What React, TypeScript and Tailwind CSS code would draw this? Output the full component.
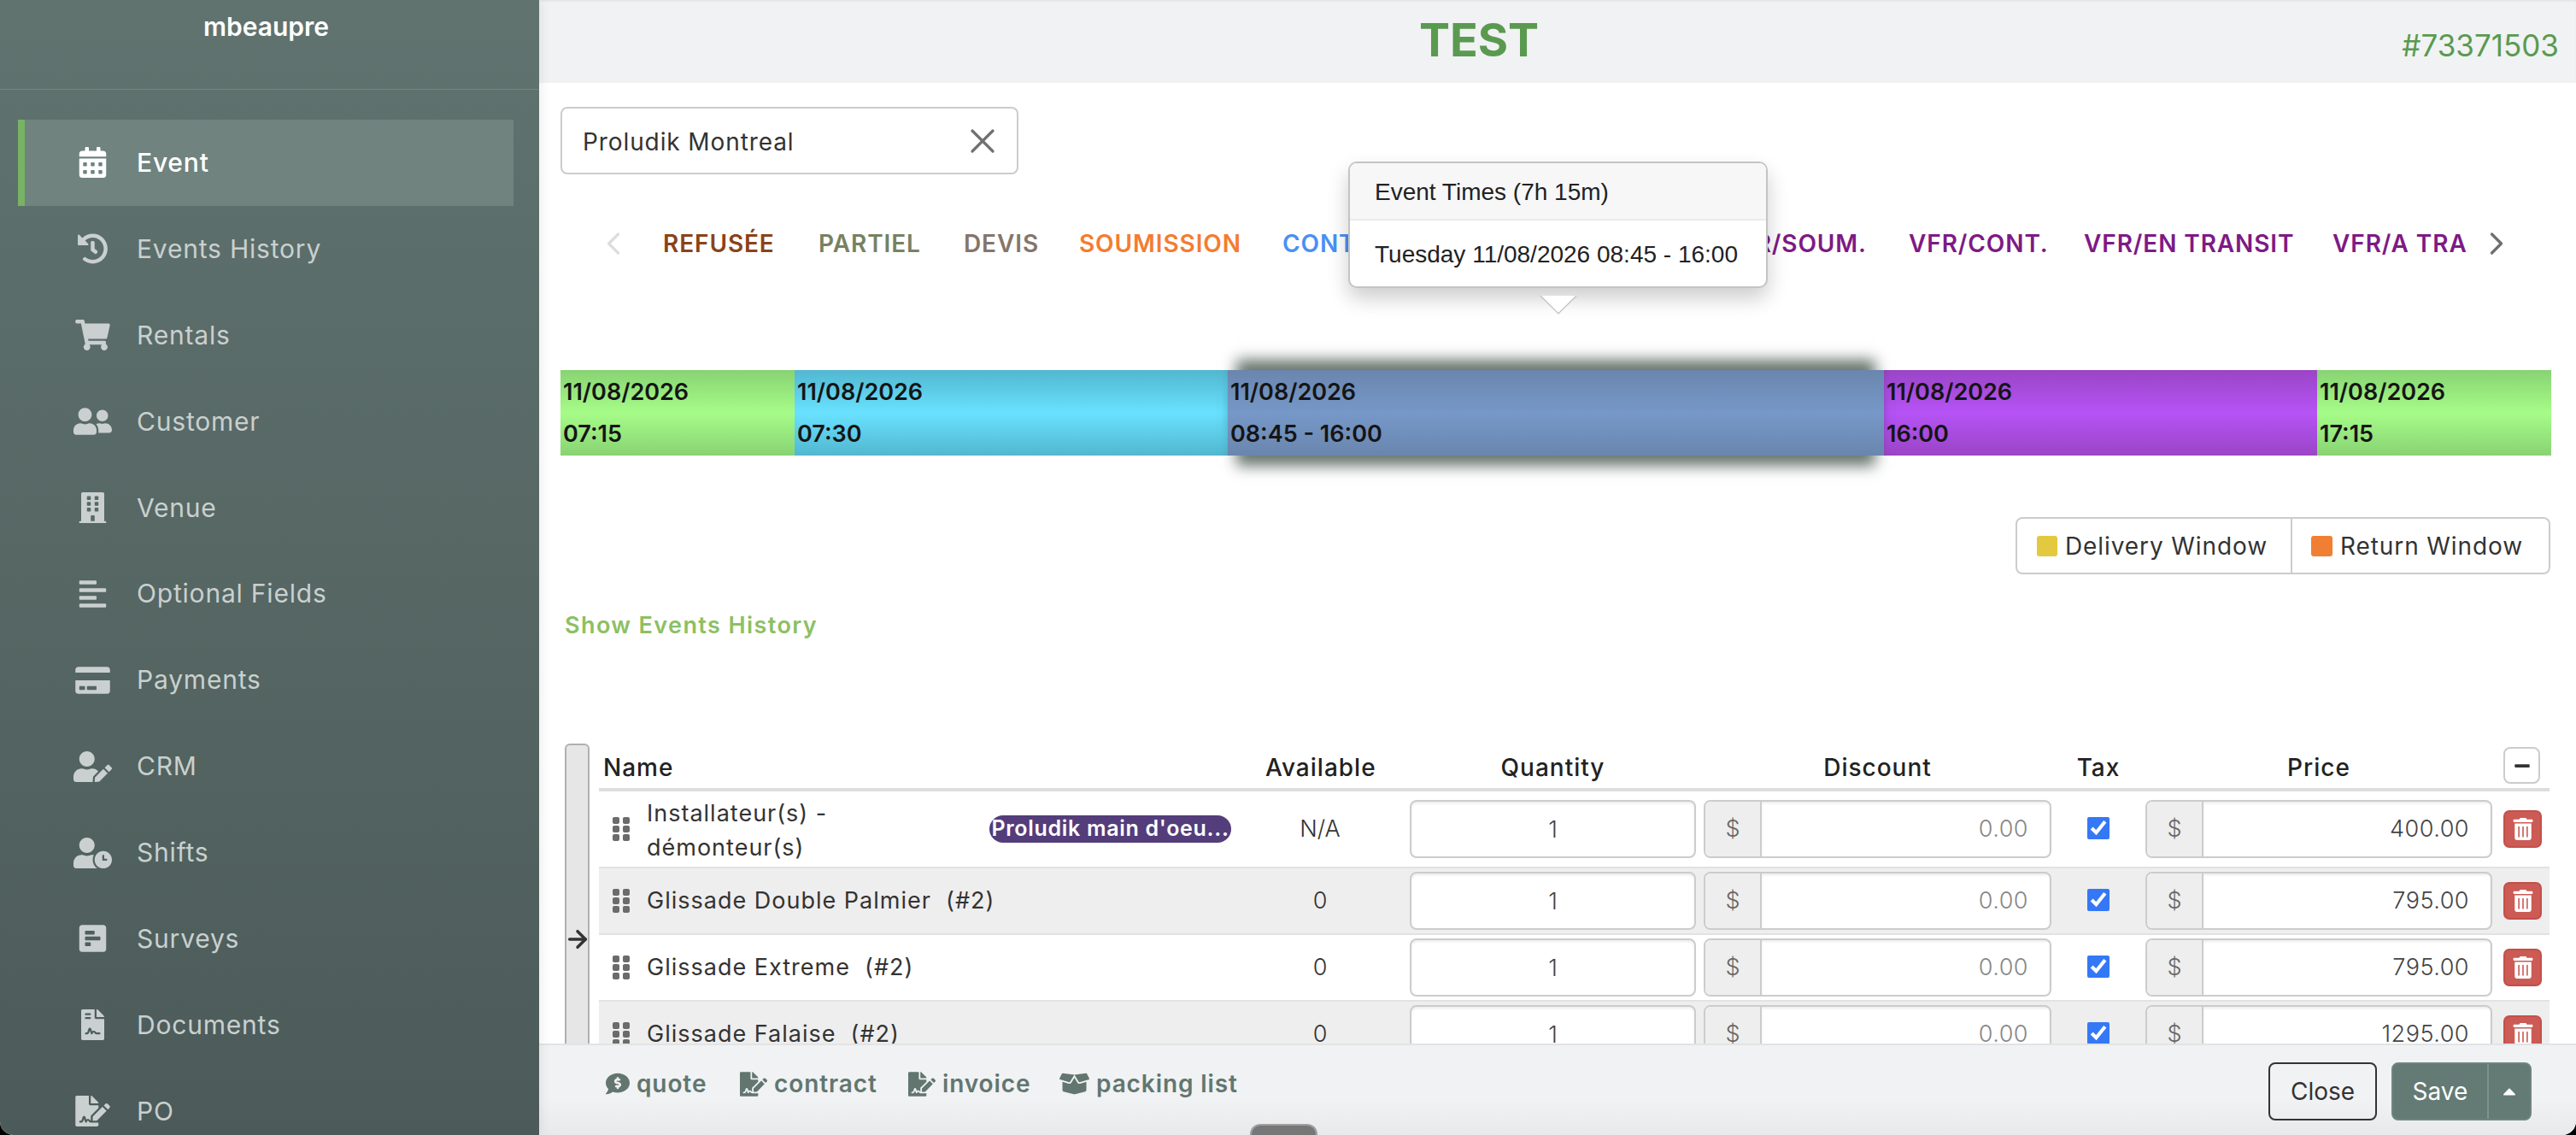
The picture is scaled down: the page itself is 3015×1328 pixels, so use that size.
import { ArrowRight, ChevronLeft, ChevronRight, X } from "lucide-react";
import type { IconType } from "react-icons";
import {
  FaAlignLeft,
  FaBoxOpen,
  FaBuilding,
  FaCalendarAlt,
  FaCaretUp,
  FaCommentDollar,
  FaCreditCard,
  FaFileContract,
  FaFileSignature,
  FaGripVertical,
  FaHistory,
  FaMinus,
  FaPollH,
  FaShoppingCart,
  FaTrashAlt,
  FaUserClock,
  FaUserEdit,
  FaUserFriends,
} from "react-icons/fa";

const navItems: { label: string; icon: IconType; active?: boolean }[] = [
  { label: "Event", icon: FaCalendarAlt, active: true },
  { label: "Events History", icon: FaHistory },
  { label: "Rentals", icon: FaShoppingCart },
  { label: "Customer", icon: FaUserFriends },
  { label: "Venue", icon: FaBuilding },
  { label: "Optional Fields", icon: FaAlignLeft },
  { label: "Payments", icon: FaCreditCard },
  { label: "CRM", icon: FaUserEdit },
  { label: "Shifts", icon: FaUserClock },
  { label: "Surveys", icon: FaPollH },
  { label: "Documents", icon: FaFileContract },
  { label: "PO", icon: FaFileSignature },
];

const tabs = [
  { label: "REFUSÉE", className: "w-[182px] text-[#8a4317]" },
  { label: "PARTIEL", className: "w-[170px] text-[#77815f]" },
  { label: "DEVIS", className: "w-[135px] text-[#85756a]" },
  { label: "SOUMISSION", className: "w-[238px] text-[#f47c30]" },
  { label: "CONTRAT", className: "w-[515px] text-[#4a90f5]" },
  { label: "VFR/SOUM.", className: "w-[218px] text-[#7d1a85]" },
  { label: "VFR/CONT.", className: "w-[205px] text-[#7d1a85]" },
  { label: "VFR/EN TRANSIT", className: "w-[291px] text-[#7d1a85]" },
  { label: "VFR/A TRANSIT", className: "w-[300px] text-[#7d1a85]" },
];

const segments = [
  { lines: ["11/08/2026", "07:15"], className: "w-[274px] from-[#88d373] via-[#a6fc88] to-[#88d373]" },
  { lines: ["11/08/2026", "07:30"], className: "w-[507px] from-[#52b7d0] via-[#69e2ff] to-[#52b7d0]" },
  {
    lines: ["11/08/2026", "08:45 - 16:00"],
    className:
      "w-[768px] relative z-10 from-[#6a86ae] via-[#7698c8] to-[#6a86ae] shadow-[0_-22px_16px_-10px_rgba(10,30,20,0.62),0_22px_16px_-10px_rgba(10,30,20,0.62)]",
  },
  { lines: ["11/08/2026", "16:00"], className: "w-[507px] from-[#9a45c6] via-[#b653f6] to-[#9a45c6]" },
  { lines: ["11/08/2026", "17:15"], className: "w-[274px] from-[#88d373] via-[#a6fc88] to-[#88d373]" },
];

const rows = [
  { name: "Installateur(s) - démonteur(s)", available: "N/A", price: "400.00", badge: "Proludik main d'oeu..." },
  { name: "Glissade Double Palmier\u00a0 (#2)", available: "0", price: "795.00" },
  { name: "Glissade Extreme\u00a0 (#2)", available: "0", price: "795.00" },
  { name: "Glissade Falaise\u00a0 (#2)", available: "0", price: "1295.00" },
];

const docLinks: { label: string; icon: IconType; className: string; iconClass: string }[] = [
  { label: "quote", icon: FaCommentDollar, className: "w-[157px]", iconClass: "h-[28px] w-[28px]" },
  { label: "contract", icon: FaFileSignature, className: "w-[197px]", iconClass: "h-[29px] w-[32px]" },
  { label: "invoice", icon: FaFileSignature, className: "w-[177px]", iconClass: "h-[29px] w-[32px]" },
  { label: "packing list", icon: FaBoxOpen, className: "w-[220px]", iconClass: "h-[28px] w-[35px]" },
];

const gridCols = "grid grid-cols-[789px_110px_385px_416px_110px_406px_67px] items-center";

function MoneyInput({ value, muted }: { value: string; muted?: boolean }) {
  return (
    <div className="flex h-[68px] overflow-hidden rounded-[8px] border-2 border-[#cccccc] bg-white">
      <span className="flex w-[66px] flex-none items-center justify-center border-r-2 border-[#cccccc] bg-[#eeeeee] text-[27px] font-light text-[#666666]">
        $
      </span>
      <input
        readOnly
        value={value}
        className={`min-w-0 flex-1 pr-[25px] text-right text-[27px] font-light tracking-[0.5px] shadow-[inset_0_2px_3px_rgba(0,0,0,0.08)] outline-none ${
          muted ? "text-[#888888]" : "text-[#444444]"
        }`}
      />
    </div>
  );
}

function ItemRow({ row, index }: { row: (typeof rows)[number]; index: number }) {
  const first = index === 0;
  return (
    <div
      className={`${gridCols} border-b-2 border-[#e2e2e2] ${first ? "h-[90px]" : "h-[78px]"} ${
        index % 2 === 1 ? "bg-[#eeeeee]" : "bg-white"
      }`}
    >
      <div className="flex items-center pr-[49px]">
        <div className="flex w-[52px] flex-none justify-center text-[#6b6b6b]">
          <FaGripVertical className="h-[32px] w-[32px]" />
        </div>
        <span
          className={`pl-[4px] text-[27px] leading-[40px] tracking-[1px] text-[#333333] ${
            first ? "w-[300px] pt-[3px]" : "whitespace-nowrap"
          }`}
        >
          {row.name}
        </span>
        {row.badge && (
          <span className="ml-auto flex h-[32px] w-[283px] items-center justify-center overflow-hidden rounded-full bg-[#533d7a] text-[25px] font-semibold tracking-[0.7px] whitespace-nowrap text-white">
            {row.badge}
          </span>
        )}
      </div>
      <div className="text-center text-[27px] font-light text-[#333333]">{row.available}</div>
      <div className="pl-[50px]">
        <input
          readOnly
          value="1"
          className="h-[68px] w-full rounded-[8px] border-2 border-[#cccccc] bg-white text-center text-[27px] font-light text-[#444444] shadow-[inset_0_2px_3px_rgba(0,0,0,0.08)] outline-none"
        />
      </div>
      <div className="pl-[9px]">
        <MoneyInput value="0.00" muted />
      </div>
      <div className="flex justify-center">
        <input type="checkbox" readOnly checked className="mb-[2px] h-[26px] w-[26px] accent-[#3478f6]" />
      </div>
      <MoneyInput value={row.price} />
      <div className="pl-[13px]">
        <button className="flex h-[44px] w-[45px] items-center justify-center rounded-[7px] border-2 border-[#c2504a] bg-[#cb5b54] text-white">
          <FaTrashAlt className="h-[26px] w-[26px]" />
        </button>
      </div>
    </div>
  );
}

export default function App() {
  return (
    <div className="h-[1328px] w-[3015px] overflow-hidden bg-black font-['Inter',sans-serif]">
      <div className="relative flex h-full overflow-hidden rounded-b-[16px] bg-white">
        {/* Sidebar */}
        <aside className="z-20 flex w-[631px] flex-none flex-col bg-linear-to-b from-[#60736f] to-[#4c5b59] shadow-[2px_0_12px_rgba(0,0,0,0.08)]">
          <div className="h-[105px] flex-none border-b border-[#748683] pt-[11px] pr-[8px] text-center text-[30px] leading-[40px] font-semibold text-white">
            mbeaupre
          </div>
          <nav className="flex flex-col px-[21px] pt-[35px]">
            {navItems.map((item) => {
              const Icon = item.icon;
              return (
                <a
                  key={item.label}
                  className={`flex h-[100.9px] w-[580px] flex-none items-center border-l-8 pl-[57px] text-[30px] tracking-[0.8px] ${
                    item.active
                      ? "border-[#78b365] bg-[#70837f] font-medium text-white"
                      : "border-transparent text-[#c9d0cf]"
                  }`}
                >
                  <Icon className="h-[36px] w-[45px] flex-none" />
                  <span className="ml-[29px]">{item.label}</span>
                </a>
              );
            })}
          </nav>
        </aside>

        {/* Main */}
        <main className="relative flex min-w-0 flex-1 flex-col">
          <header className="relative flex h-[97px] flex-none items-center justify-center bg-[#f1f2f4] pr-[184px] shadow-[inset_0_2px_2px_rgba(0,0,0,0.05)]">
            <h1 className="pb-[4px] text-[54px] font-bold text-[#5a9a50]">TEST</h1>
            <span className="absolute top-[27px] right-[20px] text-[35px] text-[#5a9a50]">#73371503</span>
          </header>

          <div className="flex min-h-0 flex-1 flex-col overflow-hidden pr-[30px] pl-[25px]">
            <div className="mt-[28px] flex h-[79px] w-[536px] flex-none items-center justify-between rounded-[8px] border-2 border-[#cccccc] pr-[16px] pl-[24px]">
              <span className="pt-[2px] text-[28px] tracking-[0.9px] text-[#333333]">Proludik Montreal</span>
              <X className="h-[48px] w-[48px] text-[#707070]" strokeWidth={1.6} />
            </div>

            <div className="mt-[56px] flex h-[50px] flex-none items-center pl-[40px]">
              <ChevronLeft className="h-[44px] w-[44px] flex-none text-[#dddddd]" strokeWidth={1.8} />
              <div className="ml-[10px] flex w-[2139px] flex-none overflow-hidden pl-[26px] text-[28px] font-semibold tracking-[0.9px]">
                {tabs.map((tab) => (
                  <span key={tab.label} className={`flex-none whitespace-nowrap ${tab.className}`}>
                    {tab.label}
                  </span>
                ))}
              </div>
              <ChevronRight className="ml-[11px] h-[44px] w-[44px] flex-none text-[#6e6e6e]" strokeWidth={1.8} />
            </div>

            <div className="mt-[123px] flex h-[100px] flex-none">
              {segments.map((seg, i) => (
                <div key={i} className={`flex-none bg-linear-to-b pl-[3px] text-[27px] font-semibold text-[#151515] ${seg.className}`}>
                  <div className="flex h-[51px] items-end pb-[5px]">{seg.lines[0]}</div>
                  <div className="flex h-[49px] items-start pt-[4px]">{seg.lines[1]}</div>
                </div>
              ))}
            </div>

            <div className="mt-[72px] flex h-[67px] w-[626px] flex-none self-end rounded-[8px] border-2 border-[#cccccc] text-[28px] tracking-[0.9px] text-[#333333]">
              <div className="flex w-[322px] items-center border-r-2 border-[#cccccc] pl-[23px]">
                <span className="mr-[9px] h-[24px] w-[24px] rounded-[3px] bg-[#e2c93f]" />
                Delivery Window
              </div>
              <div className="flex flex-1 items-center pl-[22px]">
                <span className="mr-[9px] h-[24px] w-[25px] rounded-[3px] bg-[#f07f33]" />
                Return Window
              </div>
            </div>

            <div className="mt-[40px] flex h-[40px] flex-none items-center pl-[5px] text-[27px] font-semibold tracking-[1.4px] text-[#8cc063]">
              Show Events History
            </div>

            <div className="mt-[118px] flex flex-none pl-[5px]">
              <div className="mr-[11px] flex h-[456px] w-[29px] flex-none items-center justify-center rounded-t-[6px] border-x-2 border-t-2 border-[#b0b0b0] bg-[#e6e6e6] text-[#333333]">
                <ArrowRight className="h-[32px] w-[32px] flex-none" strokeWidth={2.6} />
              </div>
              <div className="w-[2283px] flex-none">
                <div className={`${gridCols} h-[56px] border-b-4 border-[#dddddd] pt-[4px] text-[28px] font-medium tracking-[1px] text-[#222222]`}>
                  <div className="pl-[5px]">Name</div>
                  <div className="-ml-[9px] whitespace-nowrap">Available</div>
                  <div className="pl-[50px] text-center">Quantity</div>
                  <div className="pl-[9px] text-center">Discount</div>
                  <div className="text-center">Tax</div>
                  <div className="text-center">Price</div>
                  <div className="pb-[5px] pl-[13px]">
                    <button className="flex h-[43px] w-[43px] items-center justify-center rounded-[8px] border-2 border-[#cccccc] bg-white text-[#333333]">
                      <FaMinus className="h-[20px] w-[20px]" />
                    </button>
                  </div>
                </div>
                {rows.map((row, i) => (
                  <ItemRow key={row.name} row={row} index={i} />
                ))}
              </div>
            </div>
          </div>

          <footer className="relative z-10 flex h-[107px] flex-none items-start justify-between border-t-2 border-[#e2e3e5] bg-linear-to-b from-[#f1f2f4] from-60% to-[#e8e9eb] pr-[52px] pl-[78px]">
            <div className="mt-[24px] flex items-center text-[28px] font-semibold tracking-[0.9px] text-[#62766f]">
              {docLinks.map((link) => {
                const Icon = link.icon;
                return (
                  <a key={link.label} className={`flex flex-none items-center gap-[8px] ${link.className}`}>
                    <Icon className={`flex-none ${link.iconClass}`} />
                    {link.label}
                  </a>
                );
              })}
            </div>
            <div className="mt-[20px] flex gap-[17px] text-[28px]">
              <button className="h-[68px] w-[127px] rounded-[8px] border-2 border-[#333333] text-[#333333]">Close</button>
              <div className="flex h-[68px] w-[164px] overflow-hidden rounded-[8px] border-2 border-[#6f8680] bg-[#647a74] text-white">
                <span className="flex w-[112px] items-center justify-center border-r-2 border-[#7f938e]">Save</span>
                <span className="flex flex-1 items-center justify-center">
                  <FaCaretUp className="h-[24px] w-[24px]" />
                </span>
              </div>
            </div>
            <div className="absolute bottom-0 left-[832px] h-[13px] w-[79px] rounded-t-[12px] border-x-2 border-t-2 border-[#a0a0a0] bg-[#777777]" />
          </footer>

          {/* Event times popover */}
          <div className="absolute top-[189px] left-[947px] z-30 w-[491px] rounded-[10px] border-2 border-[#c4c4c4] bg-white font-['Liberation_Sans',Arial,sans-serif] text-[28px] text-[#222222] shadow-[0_12px_24px_rgba(0,0,0,0.2)]">
            <div className="flex h-[67px] items-center rounded-t-[8px] border-b-2 border-[#ebebeb] bg-[#f7f7f7] pt-[3px] pl-[29px]">
              Event Times (7h 15m)
            </div>
            <div className="flex h-[77px] items-center pt-[3px] pl-[29px]">Tuesday 11/08/2026 08:45 - 16:00</div>
          </div>
          <svg className="absolute top-[346px] left-[1171px] z-30 h-[22px] w-[44px]" viewBox="0 0 44 22">
            <path d="M1 0 L22 21 L43 0 Z" fill="#ffffff" />
            <path d="M1 0 L22 21 L43 0" fill="none" stroke="#bdbdbd" strokeWidth="1.2" />
          </svg>
        </main>
      </div>
    </div>
  );
}
